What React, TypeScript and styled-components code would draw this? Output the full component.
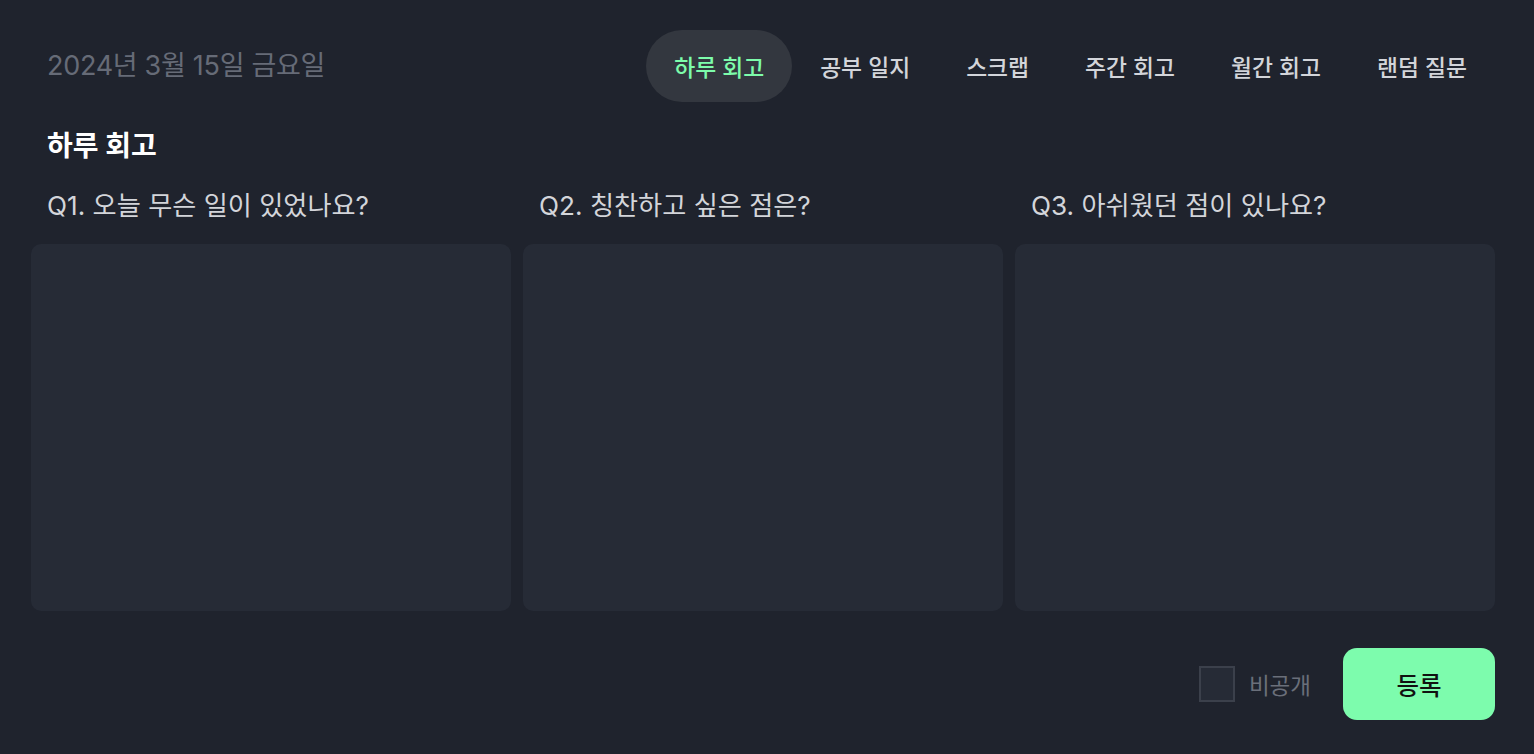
import React from "react";
import styled, { createGlobalStyle } from "styled-components";

const Global = createGlobalStyle`
  html, body { margin: 0; padding: 0; background: #1f232d; }
  body { font-family: "Inter", "Noto Sans CJK KR", sans-serif; }
  * { box-sizing: border-box; }
`;

const Page = styled.div`
  min-height: 754px;
  padding: 30px 39px 34px 31px;
  display: flex;
  flex-direction: column;
`;

const Header = styled.header`
  display: flex;
  align-items: center;
  justify-content: space-between;
  padding-left: 16px;
  height: 72px;
`;

const DateText = styled.div`
  font-size: 27px;
  line-height: 34px;
  color: #666b77;
  letter-spacing: -0.3px;
`;

const Nav = styled.nav`
  display: flex;
  align-items: center;
`;

const NavItem = styled.button<{ $active?: boolean }>`
  height: 72px;
  padding: 0 28px;
  border: none;
  border-radius: 36px;
  font-family: inherit;
  font-size: 22.8px;
  font-weight: 500;
  background: ${(p) => (p.$active ? "#33373f" : "transparent")};
  color: ${(p) => (p.$active ? "#7dfcab" : "#d3d5da")};
  cursor: pointer;
`;

const Title = styled.h1`
  margin: 26px 0 0 16px;
  font-size: 28px;
  line-height: 36px;
  font-weight: 700;
  color: #ffffff;
`;

const Grid = styled.div`
  display: grid;
  grid-template-columns: repeat(3, 1fr);
  column-gap: 12px;
  margin-top: 26px;
`;

const Column = styled.div`
  display: flex;
  flex-direction: column;
`;

const Question = styled.label`
  padding-left: 16px;
  font-size: 26.2px;
  line-height: 32px;
  color: #d3d5da;
`;

const Answer = styled.textarea`
  margin-top: 22px;
  height: 367px;
  border: none;
  border-radius: 10px;
  background: #262b36;
  resize: none;
  outline: none;
  padding: 16px;
  color: #d3d5da;
  font-family: inherit;
  font-size: 18px;
`;

const Footer = styled.div`
  display: flex;
  justify-content: flex-end;
  align-items: center;
  margin-top: 37px;
`;

const Private = styled.label`
  display: flex;
  align-items: center;
  gap: 14px;
  font-size: 22.5px;
  color: #6a6f7a;
  margin-right: 32px;
`;

const Box = styled.span`
  width: 36px;
  height: 36px;
  border: 2px solid #3b404b;
  background: #262b36;
`;

const Submit = styled.button`
  width: 152px;
  height: 72px;
  border: none;
  border-radius: 14px;
  background: #7dfcad;
  color: #111;
  font-family: inherit;
  font-size: 24.5px;
  font-weight: 500;
  cursor: pointer;
`;

const tabs = ["하루 회고", "공부 일지", "스크랩", "주간 회고", "월간 회고", "랜덤 질문"];
const questions = [
  "Q1. 오늘 무슨 일이 있었나요?",
  "Q2. 칭찬하고 싶은 점은?",
  "Q3. 아쉬웠던 점이 있나요?",
];

export default function App() {
  return (
    <>
      <Global />
      <Page>
        <Header>
          <DateText>2024년 3월 15일 금요일</DateText>
          <Nav>
            {tabs.map((t, i) => (
              <NavItem key={t} $active={i === 0}>
                {t}
              </NavItem>
            ))}
          </Nav>
        </Header>
        <Title>하루 회고</Title>
        <Grid>
          {questions.map((q) => (
            <Column key={q}>
              <Question>{q}</Question>
              <Answer />
            </Column>
          ))}
        </Grid>
        <Footer>
          <Private>
            <Box />
            비공개
          </Private>
          <Submit>등록</Submit>
        </Footer>
      </Page>
    </>
  );
}
